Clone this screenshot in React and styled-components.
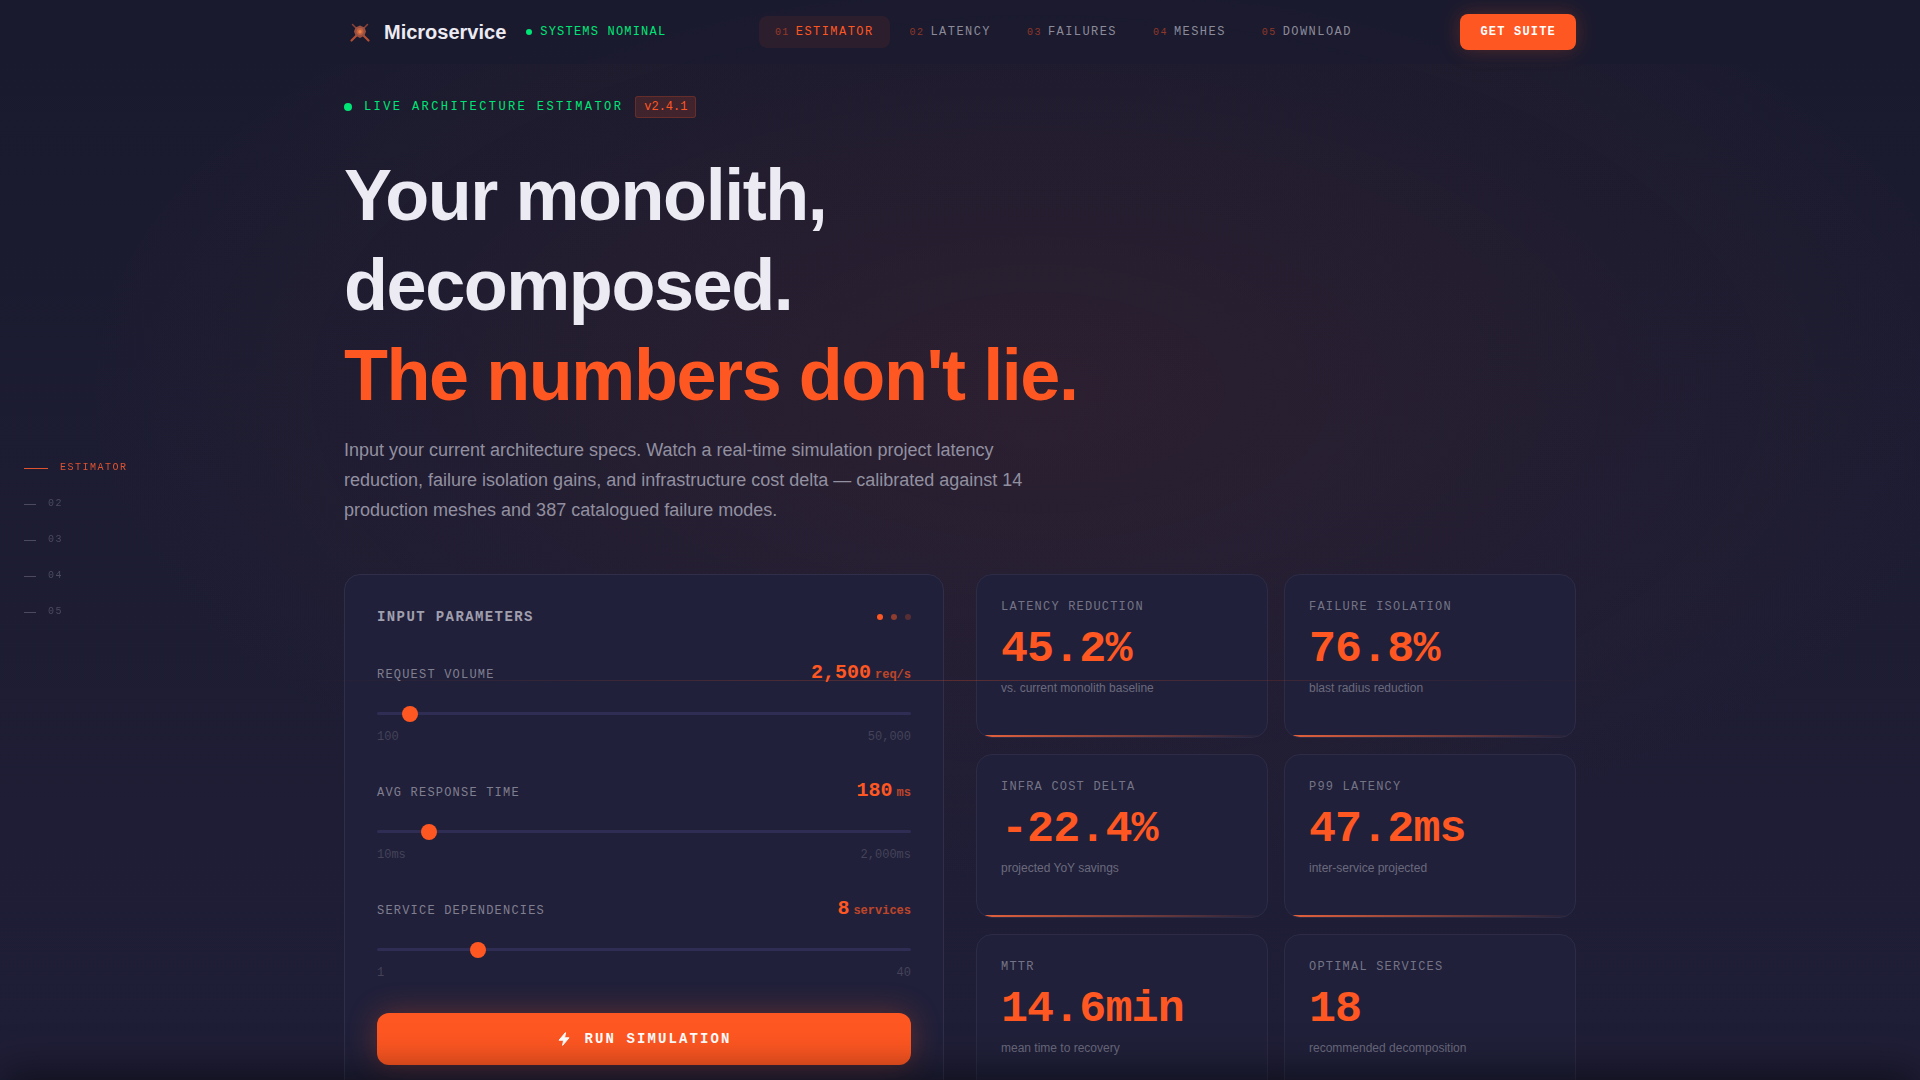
import { useState } from 'react';
import styled, { createGlobalStyle } from 'styled-components';

const SANS = `'Liberation Sans', Arial, sans-serif`;
const MONO = `'Liberation Mono', 'Courier New', monospace`;

const GlobalStyle = createGlobalStyle`
    * {
        box-sizing: border-box;
    }
    html, body {
        margin: 0;
        background: #1a1a2e;
    }
    html {
        scrollbar-width: none;
    }
    body {
        font-family: ${SANS};
        color: #eceaf2;
    }
    h1, h2, p {
        margin: 0;
    }
    button, input {
        margin: 0;
    }
`;

const Page = styled.div`
    min-height: 100vh;
    background:
        radial-gradient(ellipse 72% 66% at 54% 36%, rgba(255, 87, 34, 0.07) 0%, transparent 70%),
        linear-gradient(180deg, #1a1a2e 0%, #1f1e37 100%);
    background-size: 100% 100vh;
`;

const Header = styled.header`
    background: rgba(26, 26, 46, 0.8);
`;

const Container = styled.div`
    max-width: 1280px;
    margin: 0 auto;
    padding: 0 24px;
`;

const HeaderBar = styled(Container)`
    display: flex;
    align-items: center;
    justify-content: space-between;
    height: 64px;
`;

const Brand = styled.div`
    display: flex;
    align-items: center;
    gap: 20px;
`;

const BrandLink = styled.a`
    display: flex;
    align-items: center;
    gap: 8px;
    color: #eceaf2;
    font-size: 20px;
    line-height: 32px;
    font-weight: 700;
    text-decoration: none;
`;

const Status = styled.div`
    display: flex;
    align-items: center;
    gap: 8px;
    font-family: ${MONO};
    font-size: 12px;
    line-height: 16px;
    letter-spacing: 0.1em;
    color: #00e676;
`;

const StatusDot = styled.span`
    width: ${({ $size }) => $size}px;
    height: ${({ $size }) => $size}px;
    border-radius: 50%;
    background: #00e676;
`;

const Nav = styled.nav`
    display: flex;
    gap: 4px;
`;

const NavLink = styled.a`
    display: flex;
    align-items: center;
    gap: 6px;
    height: 32px;
    padding: 0 16px;
    border-radius: 8px;
    font-family: ${MONO};
    font-size: 12px;
    letter-spacing: 0.12em;
    text-decoration: none;
    color: ${({ $active }) => ($active ? '#ff5722' : '#8c8b9a')};
    background: ${({ $active }) => ($active ? 'rgba(255, 87, 34, 0.08)' : 'transparent')};
`;

const NavNumber = styled.span`
    font-size: 10px;
    color: rgba(255, 87, 34, 0.5);
`;

const CtaButton = styled.button`
    height: 36px;
    padding: 0 20px;
    border: 0;
    border-radius: 8px;
    background: #ff5722;
    color: #ffffff;
    font-family: ${MONO};
    font-size: 12px;
    font-weight: 700;
    letter-spacing: 0.1em;
    box-shadow: 0 0 20px rgba(255, 87, 34, 0.25);
`;

const SideNav = styled.nav`
    position: fixed;
    left: 24px;
    top: 50%;
    transform: translateY(-50%);
    display: flex;
    flex-direction: column;
    gap: 20px;
`;

const SideLink = styled.a`
    display: flex;
    align-items: center;
    gap: 12px;
    font-family: ${MONO};
    font-size: 10px;
    line-height: 16px;
    letter-spacing: 0.15em;
    text-decoration: none;
    color: ${({ $active }) => ($active ? '#e0532f' : '#4b4a5f')};

    &::before {
        content: '';
        width: ${({ $active }) => ($active ? 24 : 12)}px;
        height: 1px;
        background: currentColor;
    }
`;

const Eyebrow = styled.div`
    display: flex;
    align-items: center;
    gap: 12px;
    padding-top: 32px;
    font-family: ${MONO};
    font-size: 12px;
    line-height: 18px;
    letter-spacing: 0.2em;
    color: #00e676;
`;

const Version = styled.span`
    padding: 1px 8px;
    border: 1px solid rgba(255, 87, 34, 0.2);
    border-radius: 3px;
    background: rgba(255, 87, 34, 0.15);
    letter-spacing: 0;
    color: #ff5722;
`;

const Title = styled.h1`
    margin-top: 32px;
    font-size: 72px;
    line-height: 90px;
    font-weight: 700;
    letter-spacing: -0.02em;
`;

const Accent = styled.span`
    color: #ff5722;
`;

const Lead = styled.p`
    max-width: 688px;
    margin-top: 15px;
    font-size: 18px;
    line-height: 30px;
    color: #9290a0;
`;

const Dashboard = styled.div`
    display: grid;
    grid-template-columns: 1fr 1fr;
    gap: 32px;
    margin-top: 49px;
    padding-bottom: 48px;
`;

const Panel = styled.section`
    padding: 32px;
    border: 1px solid #302e48;
    border-radius: 16px;
    background: #20203a;
`;

const PanelHeader = styled.div`
    display: flex;
    align-items: center;
    justify-content: space-between;
`;

const PanelTitle = styled.h2`
    font-family: ${MONO};
    font-size: 14px;
    line-height: 20px;
    font-weight: 700;
    letter-spacing: 0.1em;
    color: #a09fae;
`;

const Dots = styled.div`
    display: flex;
    gap: 8px;
`;

const Dot = styled.span`
    width: 6px;
    height: 6px;
    border-radius: 50%;
    background: rgba(255, 87, 34, ${({ $alpha }) => $alpha});
`;

const Fields = styled.div`
    display: grid;
    gap: 29px;
    margin: 31px 0 30px;
`;

const FieldHeader = styled.div`
    display: flex;
    align-items: baseline;
    justify-content: space-between;
    font-family: ${MONO};
    font-size: 12px;
    line-height: 20px;
`;

const FieldLabel = styled.label`
    letter-spacing: 0.1em;
    color: #807f90;
`;

const FieldValue = styled.output`
    display: flex;
    align-items: baseline;
    gap: 4px;
    font-size: 20px;
    line-height: 30px;
    font-weight: 700;
    color: #ff5722;
`;

const Unit = styled.span`
    font-size: 12px;
    line-height: 20px;
    opacity: 0.7;
`;

const Slider = styled.input`
    display: block;
    appearance: none;
    width: 100%;
    height: 3px;
    margin-top: 24px;
    border-radius: 2px;
    background: #2f2d54;

    &::-webkit-slider-thumb {
        appearance: none;
        width: 16px;
        height: 16px;
        border-radius: 50%;
        background: #ff5722;
    }
`;

const Range = styled.div`
    display: flex;
    justify-content: space-between;
    margin-top: 12px;
    font-family: ${MONO};
    font-size: 12px;
    line-height: 20px;
    color: #444359;
`;

const RunButton = styled.button`
    display: flex;
    align-items: center;
    justify-content: center;
    gap: 12px;
    width: 100%;
    height: 52px;
    border: 0;
    border-radius: 12px;
    background: #ff5722;
    color: #ffffff;
    font-family: ${MONO};
    font-size: 14px;
    font-weight: 700;
    letter-spacing: 0.15em;
    box-shadow: 0 0 30px rgba(255, 87, 34, 0.3);
`;

const Metrics = styled.div`
    display: grid;
    grid-template-columns: 1fr 1fr;
    grid-auto-rows: 164px;
    gap: 16px;
`;

const Metric = styled.section`
    position: relative;
    overflow: hidden;
    padding: 22px 24px;
    border: 1px solid #2d2b45;
    border-radius: 16px;
    background: #20203a;

    &::after {
        content: '';
        position: absolute;
        left: 0;
        right: 0;
        bottom: 0;
        height: 2px;
        background: linear-gradient(90deg, #ff6a3c, transparent);
        opacity: 0.9;
    }
`;

const MetricLabel = styled.h2`
    font-family: ${MONO};
    font-size: 12px;
    line-height: 20px;
    font-weight: 400;
    letter-spacing: 0.1em;
    color: #757486;
`;

const MetricValue = styled.p`
    margin-top: 10px;
    font-family: ${MONO};
    font-size: 45px;
    line-height: 46px;
    font-weight: 700;
    letter-spacing: -0.02em;
    color: #ff5722;
`;

const MetricNote = styled.p`
    margin-top: 5px;
    font-size: 12px;
    line-height: 20px;
    color: #6b6a7d;
`;

const ScanLine = styled.div`
    position: fixed;
    left: 0;
    right: 0;
    top: 63vh;
    height: 1px;
    background: linear-gradient(90deg, transparent 15%, rgba(255, 87, 34, 0.25) 50%, transparent 85%);
    pointer-events: none;
`;

// sits just under the viewport, only its shadow reaches the page
const BottomBar = styled.div`
    position: fixed;
    left: 0;
    right: 0;
    top: 100%;
    height: 64px;
    box-shadow: 0 -8px 40px rgba(0, 0, 0, 0.5);
    pointer-events: none;
`;

const NAV_ITEMS = ['Estimator', 'Latency', 'Failures', 'Meshes', 'Download'];

const FIELDS = [
    { id: 'volume', label: 'REQUEST VOLUME', min: 100, max: 50000, value: 2500, unit: 'req/s', from: '100', to: '50,000' },
    { id: 'response', label: 'AVG RESPONSE TIME', min: 10, max: 2000, value: 180, unit: 'ms', from: '10ms', to: '2,000ms' },
    { id: 'services', label: 'SERVICE DEPENDENCIES', min: 1, max: 40, value: 8, unit: 'services', from: '1', to: '40' },
];

const METRICS = [
    { label: 'LATENCY REDUCTION', value: '45.2%', note: 'vs. current monolith baseline' },
    { label: 'FAILURE ISOLATION', value: '76.8%', note: 'blast radius reduction' },
    { label: 'INFRA COST DELTA', value: '-22.4%', note: 'projected YoY savings' },
    { label: 'P99 LATENCY', value: '47.2ms', note: 'inter-service projected' },
    { label: 'MTTR', value: '14.6min', note: 'mean time to recovery' },
    { label: 'OPTIMAL SERVICES', value: '18', note: 'recommended decomposition' },
];

function Logo() {
    return (
        <svg width="32" height="32" viewBox="0 0 32 32" aria-hidden="true">
            <g fill="none" strokeLinecap="round">
                <path d="M8.5 8.5L16 16L23.5 8.5" strokeWidth="1.5" stroke="#8c4236" />
                <path d="M7.5 24.5L16 16L24.5 24.5" strokeWidth="2.2" stroke="#b04f35" />
            </g>
            <path d="M16 9.5L20.5 11.5L22 15.5L20.5 19.5L16 22L11.5 19.5L10 15.5L11.5 11.5Z" fill="#9a5040" />
            <circle cx="16" cy="15.5" r="3.4" fill="#c0603e" />
            <circle cx="16" cy="15.8" r="1.7" fill="#ec8248" />
        </svg>
    );
}

function Bolt() {
    return (
        <svg width="16" height="16" viewBox="0 0 16 16" fill="currentColor" aria-hidden="true">
            <path
                d="M9.5 1.6L3 9.2H7.6L6.6 14.4L13 6.8H8.6Z"
                stroke="currentColor"
                strokeWidth="1"
                strokeLinejoin="round"
            />
        </svg>
    );
}

function ParameterField({ id, label, min, max, value: initial, unit, from, to }) {
    const [value, setValue] = useState(initial);

    return (
        <div>
            <FieldHeader>
                <FieldLabel htmlFor={id}>{label}</FieldLabel>
                <FieldValue htmlFor={id}>
                    {value.toLocaleString('en-US')}
                    <Unit>{unit}</Unit>
                </FieldValue>
            </FieldHeader>
            <Slider id={id} type="range" min={min} max={max} value={value} onChange={(e) => setValue(Number(e.target.value))} />
            <Range>
                <span>{from}</span>
                <span>{to}</span>
            </Range>
        </div>
    );
}

function App() {
    return (
        <Page>
            <GlobalStyle />
            <Header>
                <HeaderBar>
                    <Brand>
                        <BrandLink href="#top">
                            <Logo />
                            Microservice
                        </BrandLink>
                        <Status>
                            <StatusDot $size={6} />
                            SYSTEMS NOMINAL
                        </Status>
                    </Brand>
                    <Nav aria-label="Main">
                        {NAV_ITEMS.map((item, i) => (
                            <NavLink key={item} href={`#${item.toLowerCase()}`} $active={i === 0}>
                                <NavNumber>0{i + 1}</NavNumber>
                                {item.toUpperCase()}
                            </NavLink>
                        ))}
                    </Nav>
                    <CtaButton type="button">GET SUITE</CtaButton>
                </HeaderBar>
            </Header>

            <SideNav aria-label="Sections">
                {NAV_ITEMS.map((item, i) => (
                    <SideLink key={item} href={`#${item.toLowerCase()}`} $active={i === 0}>
                        {i === 0 ? item.toUpperCase() : `0${i + 1}`}
                    </SideLink>
                ))}
            </SideNav>

            <Container as="main">
                <Eyebrow>
                    <StatusDot $size={8} />
                    LIVE ARCHITECTURE ESTIMATOR
                    <Version>v2.4.1</Version>
                </Eyebrow>
                <Title>
                    Your monolith,
                    <br />
                    decomposed.
                    <br />
                    <Accent>The numbers don't lie.</Accent>
                </Title>
                <Lead>
                    Input your current architecture specs. Watch a real-time simulation project latency reduction, failure
                    isolation gains, and infrastructure cost delta — calibrated against 14 production meshes and 387
                    catalogued failure modes.
                </Lead>

                <Dashboard>
                    <Panel>
                        <PanelHeader>
                            <PanelTitle>INPUT PARAMETERS</PanelTitle>
                            <Dots>
                                <Dot $alpha={1} />
                                <Dot $alpha={0.5} />
                                <Dot $alpha={0.25} />
                            </Dots>
                        </PanelHeader>
                        <Fields>
                            {FIELDS.map((field) => (
                                <ParameterField key={field.id} {...field} />
                            ))}
                        </Fields>
                        <RunButton type="button">
                            <Bolt />
                            RUN SIMULATION
                        </RunButton>
                    </Panel>
                    <Metrics>
                        {METRICS.map((metric) => (
                            <Metric key={metric.label}>
                                <MetricLabel>{metric.label}</MetricLabel>
                                <MetricValue>{metric.value}</MetricValue>
                                <MetricNote>{metric.note}</MetricNote>
                            </Metric>
                        ))}
                    </Metrics>
                </Dashboard>
            </Container>

            <ScanLine />
            <BottomBar />
        </Page>
    );
}

export default App;
